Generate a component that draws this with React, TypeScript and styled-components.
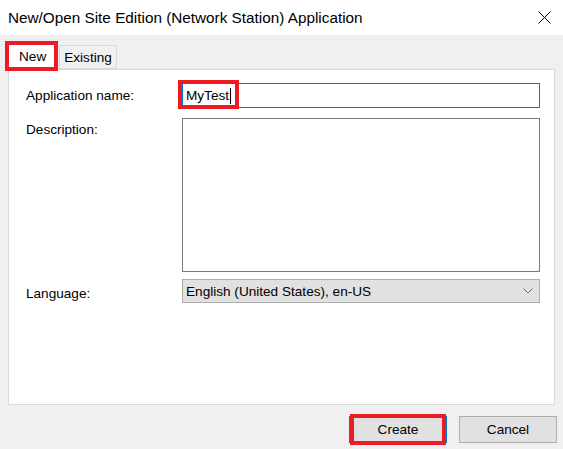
import React from "react";
import styled, { createGlobalStyle } from "styled-components";

const GlobalStyle = createGlobalStyle`
  html, body {
    margin: 0;
    padding: 0;
    width: 563px;
    height: 449px;
    overflow: hidden;
    background: #f0f0f0;
    font-family: "Liberation Sans", Arial, sans-serif;
  }
`;

const Window = styled.div`
  width: 563px;
  height: 449px;
  display: flex;
  flex-direction: column;
  background: #f0f0f0;
  color: #000;
  font-size: 13.6px;
`;

const TitleBar = styled.div`
  height: 35px;
  flex: none;
  background: #fff;
  display: flex;
  align-items: center;
  justify-content: space-between;
  padding: 0 12px 0 8px;
`;

const Title = styled.span`
  font-size: 15.3px;
  color: #000;
`;

const CloseIcon = styled.svg`
  width: 13px;
  height: 13px;
  margin-top: -1px;
`;

const Body = styled.div`
  flex: 1;
  display: flex;
  flex-direction: column;
  padding: 0 8px;
`;

const TabStrip = styled.div`
  display: flex;
  align-items: flex-end;
  height: 34px;
  gap: 2px;
`;

const Tab = styled.div<{ $active?: boolean }>`
  position: relative;
  box-sizing: border-box;
  height: ${(p) => (p.$active ? "28px" : "24px")};
  padding: 0 ${(p) => (p.$active ? "10px" : "4px")};
  margin-bottom: ${(p) => (p.$active ? "-1px" : "0")};
  background: ${(p) => (p.$active ? "#fff" : "#f0f0f0")};
  border: 1px solid #d9d9d9;
  border-bottom: ${(p) => (p.$active ? "none" : "1px solid #d9d9d9")};
  display: flex;
  align-items: center;
  z-index: ${(p) => (p.$active ? 1 : 0)};
`;

const Highlight = styled.div<{ $t: number; $r: number; $b: number; $l: number }>`
  position: absolute;
  top: ${(p) => p.$t}px;
  right: ${(p) => p.$r}px;
  bottom: ${(p) => p.$b}px;
  left: ${(p) => p.$l}px;
  border: 4px solid #ed1c24;
  pointer-events: none;
  z-index: 5;
`;

const Panel = styled.div`
  box-sizing: border-box;
  height: 336px;
  background: #fff;
  border: 1px solid #d9d9d9;
  padding: 13px 14px 0 17px;
  display: grid;
  grid-template-columns: 156px 1fr;
  grid-template-rows: 25px 154px 23px;
  row-gap: 10px;
`;

const Label = styled.div<{ $top?: boolean }>`
  display: flex;
  align-items: ${(p) => (p.$top ? "flex-start" : "center")};
  padding-top: ${(p) => (p.$top ? "4px" : "0")};
  line-height: 16px;
`;

const TextInput = styled.div`
  position: relative;
  box-sizing: border-box;
  border: 1px solid #0078d7;
  display: flex;
  align-items: center;
  padding-left: 3px;
`;

const Caret = styled.span`
  display: inline-block;
  width: 1px;
  height: 16px;
  background: #000;
  margin-left: 1px;
`;

const TextArea = styled.div`
  box-sizing: border-box;
  border: 1px solid #7a7a7a;
`;

const Combo = styled.div`
  box-sizing: border-box;
  margin-top: -3px;
  height: 24px;
  background: #e1e1e1;
  border: 1px solid #adadad;
  display: flex;
  align-items: center;
  justify-content: space-between;
  padding: 0 6px 0 3px;
`;

const Chevron = styled.svg`
  width: 10px;
  height: 6px;
`;

const Footer = styled.div`
  display: flex;
  justify-content: flex-end;
  gap: 12px;
  padding: 11px 0 0 0;
  margin-right: -2px;
`;

const Button = styled.div<{ $primary?: boolean }>`
  position: relative;
  box-sizing: border-box;
  width: 98px;
  height: 27px;
  background: #e1e1e1;
  border: ${(p) => (p.$primary ? "2px solid #0078d7" : "1px solid #adadad")};
  display: flex;
  align-items: center;
  justify-content: center;
`;

export default function App() {
  return (
    <>
      <GlobalStyle />
      <Window>
        <TitleBar>
          <Title>New/Open Site Edition (Network Station) Application</Title>
          <CloseIcon viewBox="0 0 13 13">
            <path d="M0.5 0.5 L12.5 12.5 M12.5 0.5 L0.5 12.5" stroke="#000" strokeWidth="1" />
          </CloseIcon>
        </TitleBar>
        <Body>
          <TabStrip>
            <Tab $active>
              New
              <Highlight $t={-2} $r={-2} $b={-1} $l={-4} />
            </Tab>
            <Tab>Existing</Tab>
          </TabStrip>
          <Panel>
            <Label>Application name:</Label>
            <TextInput>
              MyTest
              <Caret />
              <Highlight $t={-4} $r={300} $b={-2} $l={-5} />
            </TextInput>
            <Label $top>Description:</Label>
            <TextArea />
            <Label>Language:</Label>
            <Combo>
              English (United States), en-US
              <Chevron viewBox="0 0 10 6">
                <path d="M0.5 0.5 L5 5 L9.5 0.5" fill="none" stroke="#777" strokeWidth="1" />
              </Chevron>
            </Combo>
          </Panel>
          <Footer>
            <Button $primary>
              Create
              <Highlight $t={-4} $r={-1} $b={-4} $l={-1} />
            </Button>
            <Button>Cancel</Button>
          </Footer>
        </Body>
      </Window>
    </>
  );
}
